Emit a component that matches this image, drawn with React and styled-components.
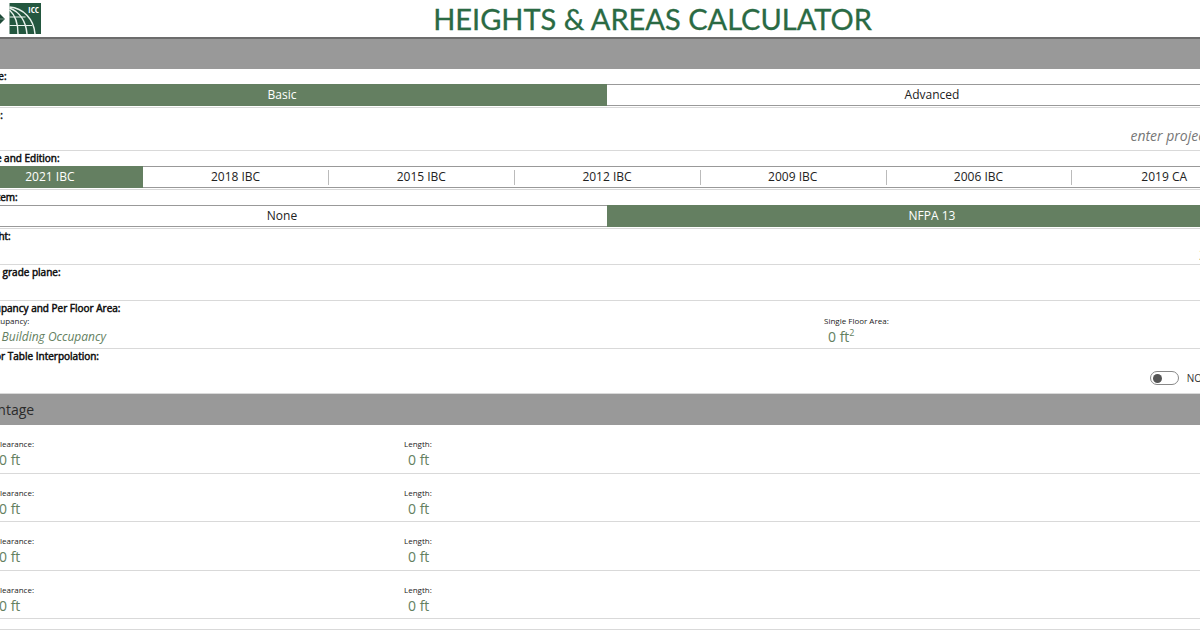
import React, { useState } from "react";
import styled, { createGlobalStyle } from "styled-components";

const GlobalStyle = createGlobalStyle`
  *, *::before, *::after { box-sizing: border-box; }
  body {
    margin: 0;
    overflow: hidden;
    background: #fff;
    color: #222;
    font-family: "Open Sans", "Noto Sans", sans-serif;
  }
  button, input { font: inherit; color: inherit; }
`;

/* The form is a little wider than the window and runs past both edges. */
const Page = styled.main`
  width: calc(100% + 158px);
  margin-left: -72px;
`;

const Header = styled.header`
  display: flex;
  align-items: center;
  height: 39px;
  border-bottom: 2px solid #6c6c6c;
`;

const Title = styled.h1`
  flex: 1;
  margin: 0;
  padding-right: 22px;
  text-align: center;
  font-family: Lato, sans-serif;
  font-size: 29px;
  line-height: 38px;
  font-weight: 400;
  color: #2a6a43;
  -webkit-text-stroke: 0.3px #2a6a43;
`;

const Bar = styled.h2`
  margin: 0;
  height: ${(p) => p.$height}px;
  padding-left: 48px;
  background: #999;
  font-size: 14px;
  line-height: 31px;
  font-weight: 400;
  color: #2b2b2b;
`;

const Row = styled.section`
  min-height: ${(p) => p.$height}px;
  border-bottom: 1px solid #d9d9d9;
`;

const Label = styled.label`
  display: block;
  padding-left: 9px;
  font-size: 10px;
  line-height: 15px;
  color: #111;
  -webkit-text-stroke: 0.5px #111;
`;

const Segments = styled.div`
  display: flex;
  height: 22px;
  margin: 0 29px;
  border: solid #999;
  border-width: 1px 0;
`;

const Segment = styled.button`
  flex: 1 1 0;
  display: flex;
  align-items: center;
  justify-content: center;
  margin: ${(p) => (p.$active ? "-1px 0" : "0")};
  padding: 0;
  border: 0;
  background: ${(p) => (p.$active ? "#647f61" : "transparent")};
  color: ${(p) => (p.$active ? "#fff" : "#222")};
  font-size: 12px;
  line-height: 20px;

  &::before {
    content: "";
    width: 1px;
    height: 15px;
    margin-right: auto;
    background: ${(p) => (p.$divided ? "#bbb" : "transparent")};
  }
  &::after {
    content: "";
    width: 1px;
    margin-left: auto;
  }
`;

const TextField = styled.input`
  display: block;
  width: calc(100% - 38px);
  height: ${(p) => p.$height}px;
  padding: 0;
  border: 0;
  outline: 0;
  background: transparent;
  text-align: right;
  font-size: 14px;
  color: #647f61;

  &::placeholder {
    font-style: italic;
    color: #777;
    opacity: 1;
  }
`;

const OccupancyFields = styled.div`
  display: grid;
  grid-template-columns: 870fr 462fr;
  padding-left: 26px;
`;

const PerimeterList = styled.div`
  display: grid;
  grid-auto-rows: 1fr;
  min-height: 194px;
`;

const PerimeterRow = styled.div`
  display: grid;
  grid-template-columns: 409fr 882fr;
  padding: 14px 0 0 67px;
  border-bottom: 1px solid #d9d9d9;
`;

const FieldName = styled.div`
  font-size: 8px;
  line-height: 10px;
  color: #222;
`;

const FieldValue = styled.div`
  padding-left: ${(p) => (p.$prompt ? 14 : 4)}px;
  font-size: ${(p) => (p.$prompt ? 12 : 14)}px;
  line-height: 22px;
  font-style: ${(p) => (p.$prompt ? "italic" : "normal")};
  color: #647f61;
  white-space: nowrap;

  sup {
    font-size: 9px;
    line-height: 0;
  }
`;

const SwitchLine = styled.label`
  display: flex;
  align-items: center;
  justify-content: flex-end;
  gap: 8px;
  height: 28px;
  padding-right: 84px;
  font-size: 10px;
  color: #333;
`;

const Switch = styled.input`
  appearance: none;
  display: flex;
  align-items: center;
  justify-content: ${(p) => (p.checked ? "flex-end" : "flex-start")};
  width: 29px;
  height: 14px;
  margin: 0;
  padding: 0 2px;
  border: 1px solid #888;
  border-radius: 7px;

  &::before {
    content: "";
    width: 9px;
    height: 9px;
    border-radius: 50%;
    background: #555;
  }
`;

function Logo() {
  return (
    <svg width="113" height="36" viewBox="0 0 113 36" role="img" aria-label="ICC logo">
      <path d="M64 5 77 18 64 31 51 18Z" fill="#1d4a37" />
      <path d="M51 18H77" stroke="#b9cbc1" strokeWidth="0.600" />
      <path d="M81.500 2H113V33H81.500Z" fill="#23573f" />
      <g fill="none" stroke="#e9f2ec" strokeWidth="1.500">
        <path d="M81.500 6C95 7 106 18 107 33" />
        <path d="M81.500 7C92 11 98 21 99 33" />
        <path d="M81.500 9C87 14 90 23 90 33" />
        <path d="M81.500 16H97.500M81.500 24.500H104" strokeWidth="1.200" />
      </g>
      <text
        x="111"
        y="12"
        fill="#fff"
        textAnchor="end"
        fontFamily="'Liberation Sans Narrow', 'Open Sans Condensed', 'Roboto Condensed', Lato, sans-serif"
        fontSize="9"
        fontWeight="700"
      >
        ICC
      </text>
    </svg>
  );
}

function Choice({ label, options, initial, divided }) {
  const [selected, setSelected] = useState(initial);
  return (
    <Segments role="group" aria-label={label}>
      {options.map((option, i) => (
        <Segment
          key={option}
          type="button"
          aria-pressed={option === selected}
          $active={option === selected}
          $divided={divided && i > 0 && options[i - 1] !== selected && option !== selected}
          onClick={() => setSelected(option)}
        >
          {option}
        </Segment>
      ))}
    </Segments>
  );
}

const EDITIONS = ["2021 IBC", "2018 IBC", "2015 IBC", "2012 IBC", "2009 IBC", "2006 IBC", "2019 CA"];
const SIDES = ["front", "right", "rear", "left"];

export default function App() {
  const [interpolate, setInterpolate] = useState(false);
  return (
    <>
      <GlobalStyle />
      <Page>
        <Header>
          <Logo />
          <Title>HEIGHTS &amp; AREAS CALCULATOR</Title>
        </Header>
        <Bar as="div" $height={30} />
        <Row $height={39}>
          <Label as="div">Analysis Mode:</Label>
          <Choice label="Analysis Mode" options={["Basic", "Advanced"]} initial="Basic" />
        </Row>
        <Row $height={43}>
          <Label htmlFor="project">Project Name:</Label>
          <TextField id="project" $height={24} placeholder="enter project name" />
        </Row>
        <Row $height={39}>
          <Label as="div">Building Code and Edition:</Label>
          <Choice label="Building Code and Edition" options={EDITIONS} initial="2021 IBC" divided />
        </Row>
        <Row $height={39}>
          <Label as="div">Sprinkler System:</Label>
          <Choice label="Sprinkler System" options={["None", "NFPA 13"]} initial="NFPA 13" />
        </Row>
        <Row $height={36}>
          <Label htmlFor="height">Building Height:</Label>
          <TextField id="height" $height={20} defaultValue="25.00 ft" />
        </Row>
        <Row $height={36}>
          <Label as="div">Stories above grade plane:</Label>
        </Row>
        <Row $height={48}>
          <Label as="div">Building Occupancy and Per Floor Area:</Label>
          <OccupancyFields>
            <div>
              <FieldName>Building Occupancy:</FieldName>
              <FieldValue $prompt>Select Building Occupancy</FieldValue>
            </div>
            <div>
              <FieldName>Single Floor Area:</FieldName>
              <FieldValue>
                0 ft<sup>2</sup>
              </FieldValue>
            </div>
          </OccupancyFields>
        </Row>
        <Row $height={45}>
          <Label as="div">Check here for Table Interpolation:</Label>
          <SwitchLine>
            <Switch
              type="checkbox"
              role="switch"
              checked={interpolate}
              onChange={(e) => setInterpolate(e.target.checked)}
            />
            {interpolate ? "YES" : "NO"}
          </SwitchLine>
        </Row>
        <Bar $height={31}>Frontage</Bar>
        <PerimeterList>
          {SIDES.map((side) => (
            <PerimeterRow key={side}>
              <div>
                <FieldName>Clearance:</FieldName>
                <FieldValue>0 ft</FieldValue>
              </div>
              <div>
                <FieldName>Length:</FieldName>
                <FieldValue>0 ft</FieldValue>
              </div>
            </PerimeterRow>
          ))}
        </PerimeterList>
        <Row $height={11} />
      </Page>
    </>
  );
}
